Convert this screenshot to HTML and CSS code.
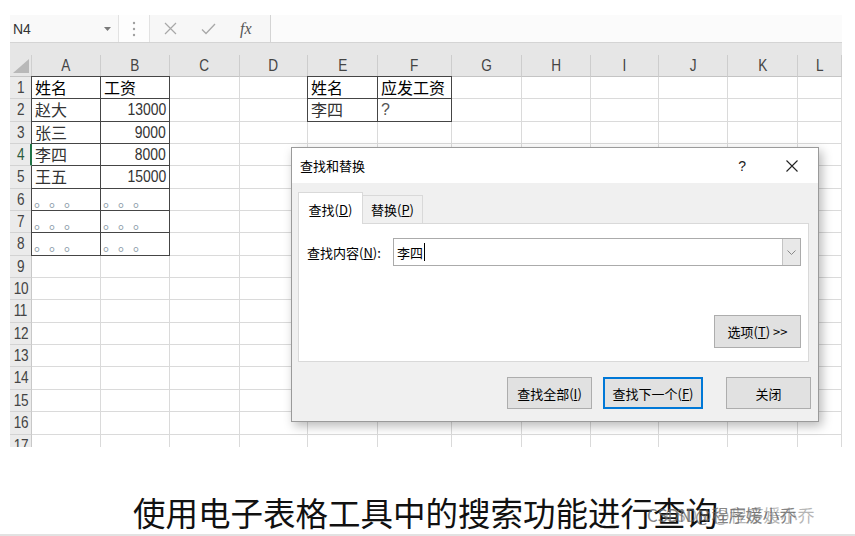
FILE: index.html
```html
<!DOCTYPE html>
<html lang="zh-CN">
<head>
<meta charset="utf-8">
<title>查找和替换</title>
<link rel="stylesheet" href="styles.css">
</head>
<body>
<div class="page">
  <div class="excel">
    <div class="fbar">
      <div class="namebox"><span>N4</span><svg width="7" height="4" viewBox="0 0 7 4"><path d="M0 0H7L3.5 4Z" fill="#7a7a7a"/></svg></div>
      <div class="grip"><svg width="4" height="16" viewBox="0 0 4 16"><circle cx="2" cy="2" r="1.2" fill="#a0a0a0"/><circle cx="2" cy="8" r="1.2" fill="#a0a0a0"/><circle cx="2" cy="14" r="1.2" fill="#a0a0a0"/></svg></div>
      <div class="fbtns">
        <svg class="fx-x" width="13" height="13" viewBox="0 0 13 13"><path d="M1 1L12 12M12 1L1 12" stroke="#a8a8a8" stroke-width="1.2" fill="none"/></svg>
        <svg class="fx-ok" width="15" height="12" viewBox="0 0 15 12"><path d="M1 6.5L5 10.5L14 1" stroke="#a8a8a8" stroke-width="1.3" fill="none"/></svg>
        <span class="fx">fx</span>
      </div>
      <div class="formula"></div>
    </div>
    <div class="band"></div>
    <div class="grid">
      <div class="corner"><svg width="16" height="14" viewBox="0 0 16 14"><path d="M16 0V14H0Z" fill="#b8b8b8"/></svg></div>
      <div class="ch"><span>A</span></div><div class="ch"><span>B</span></div><div class="ch"><span>C</span></div><div class="ch"><span>D</span></div><div class="ch"><span>E</span></div><div class="ch"><span>F</span></div><div class="ch"><span>G</span></div><div class="ch"><span>H</span></div><div class="ch"><span>I</span></div><div class="ch"><span>J</span></div><div class="ch"><span>K</span></div><div class="ch"><span>L</span></div>

      <div class="rh"><span>1</span></div><div class="c t tl tt hd">姓名</div><div class="c t tt hd">工资</div><div class="c"></div><div class="c"></div><div class="c t tl tt hd">姓名</div><div class="c t tt hd">应发工资</div><div class="c"></div><div class="c"></div><div class="c"></div><div class="c"></div><div class="c"></div><div class="c"></div>

      <div class="rh"><span>2</span></div><div class="c t tl">赵大</div><div class="c t num"><span>13000</span></div><div class="c"></div><div class="c"></div><div class="c t tl">李四</div><div class="c t q">?</div><div class="c"></div><div class="c"></div><div class="c"></div><div class="c"></div><div class="c"></div><div class="c"></div>

      <div class="rh"><span>3</span></div><div class="c t tl">张三</div><div class="c t num"><span>9000</span></div><div class="c"></div><div class="c"></div><div class="c"></div><div class="c"></div><div class="c"></div><div class="c"></div><div class="c"></div><div class="c"></div><div class="c"></div><div class="c"></div>

      <div class="rh sel"><span>4</span></div><div class="c t">李四</div><div class="c t num"><span>8000</span></div><div class="c"></div><div class="c"></div><div class="c"></div><div class="c"></div><div class="c"></div><div class="c"></div><div class="c"></div><div class="c"></div><div class="c"></div><div class="c"></div>

      <div class="rh"><span>5</span></div><div class="c t tl">王五</div><div class="c t num"><span>15000</span></div><div class="c"></div><div class="c"></div><div class="c"></div><div class="c"></div><div class="c"></div><div class="c"></div><div class="c"></div><div class="c"></div><div class="c"></div><div class="c"></div>

      <div class="rh"><span>6</span></div><div class="c t tl dots"><span>。</span><span>。</span><span>。</span></div><div class="c t dots"><span>。</span><span>。</span><span>。</span></div><div class="c"></div><div class="c"></div><div class="c"></div><div class="c"></div><div class="c"></div><div class="c"></div><div class="c"></div><div class="c"></div><div class="c"></div><div class="c"></div>

      <div class="rh"><span>7</span></div><div class="c t tl dots"><span>。</span><span>。</span><span>。</span></div><div class="c t dots"><span>。</span><span>。</span><span>。</span></div><div class="c"></div><div class="c"></div><div class="c"></div><div class="c"></div><div class="c"></div><div class="c"></div><div class="c"></div><div class="c"></div><div class="c"></div><div class="c"></div>

      <div class="rh"><span>8</span></div><div class="c t tl dots"><span>。</span><span>。</span><span>。</span></div><div class="c t dots"><span>。</span><span>。</span><span>。</span></div><div class="c"></div><div class="c"></div><div class="c"></div><div class="c"></div><div class="c"></div><div class="c"></div><div class="c"></div><div class="c"></div><div class="c"></div><div class="c"></div>

      <div class="rh"><span>9</span></div><div class="c"></div><div class="c"></div><div class="c"></div><div class="c"></div><div class="c"></div><div class="c"></div><div class="c"></div><div class="c"></div><div class="c"></div><div class="c"></div><div class="c"></div><div class="c"></div>
      <div class="rh"><span>10</span></div><div class="c"></div><div class="c"></div><div class="c"></div><div class="c"></div><div class="c"></div><div class="c"></div><div class="c"></div><div class="c"></div><div class="c"></div><div class="c"></div><div class="c"></div><div class="c"></div>
      <div class="rh"><span>11</span></div><div class="c"></div><div class="c"></div><div class="c"></div><div class="c"></div><div class="c"></div><div class="c"></div><div class="c"></div><div class="c"></div><div class="c"></div><div class="c"></div><div class="c"></div><div class="c"></div>
      <div class="rh"><span>12</span></div><div class="c"></div><div class="c"></div><div class="c"></div><div class="c"></div><div class="c"></div><div class="c"></div><div class="c"></div><div class="c"></div><div class="c"></div><div class="c"></div><div class="c"></div><div class="c"></div>
      <div class="rh"><span>13</span></div><div class="c"></div><div class="c"></div><div class="c"></div><div class="c"></div><div class="c"></div><div class="c"></div><div class="c"></div><div class="c"></div><div class="c"></div><div class="c"></div><div class="c"></div><div class="c"></div>
      <div class="rh"><span>14</span></div><div class="c"></div><div class="c"></div><div class="c"></div><div class="c"></div><div class="c"></div><div class="c"></div><div class="c"></div><div class="c"></div><div class="c"></div><div class="c"></div><div class="c"></div><div class="c"></div>
      <div class="rh"><span>15</span></div><div class="c"></div><div class="c"></div><div class="c"></div><div class="c"></div><div class="c"></div><div class="c"></div><div class="c"></div><div class="c"></div><div class="c"></div><div class="c"></div><div class="c"></div><div class="c"></div>
      <div class="rh"><span>16</span></div><div class="c"></div><div class="c"></div><div class="c"></div><div class="c"></div><div class="c"></div><div class="c"></div><div class="c"></div><div class="c"></div><div class="c"></div><div class="c"></div><div class="c"></div><div class="c"></div>
      <div class="rh"><span>17</span></div><div class="c"></div><div class="c"></div><div class="c"></div><div class="c"></div><div class="c"></div><div class="c"></div><div class="c"></div><div class="c"></div><div class="c"></div><div class="c"></div><div class="c"></div><div class="c"></div>
    </div>

    <div class="dialog">
      <div class="dtitle">
        <span>查找和替换</span>
        <div class="dctl">
          <span class="help">?</span>
          <svg width="12" height="12" viewBox="0 0 12 12"><path d="M0.5 0.5L11.5 11.5M11.5 0.5L0.5 11.5" stroke="#222" stroke-width="1.1" fill="none"/></svg>
        </div>
      </div>
      <div class="dbody">
        <div class="tabs">
          <div class="tab on">查找(<u>D</u>)</div>
          <div class="tab">替换(<u>P</u>)</div>
        </div>
        <div class="panel">
          <div class="frow">
            <div class="lbl">查找内容(<u>N</u>):</div>
            <div class="combo">
              <span class="val">李四</span><span class="cursor"></span>
              <span class="drop"><svg width="9" height="5" viewBox="0 0 9 5"><path d="M0.5 0.5L4.5 4.5L8.5 0.5" stroke="#888" stroke-width="1" fill="none"/></svg></span>
            </div>
          </div>
          <div class="optrow"><button class="btn opt">选项(<u>T</u>) &gt;&gt;</button></div>
        </div>
        <div class="brow">
          <button class="btn b1">查找全部(<u>I</u>)</button>
          <button class="btn b2">查找下一个(<u>F</u>)</button>
          <button class="btn b3">关闭</button>
        </div>
      </div>
    </div>
  </div>

  <div class="caption">使用电子表格工具中的搜索功能进行查询</div>
  <div class="rule"></div>
  <div class="wm">CSDN @程序媛小乔</div>
</div>
</body>
</html>
```

FILE: styles.css
```css
* { box-sizing: border-box; margin: 0; padding: 0; }
html, body { background: #fff; }
body {
  margin: 0;
  width: 855px;
  height: 536px;
  overflow: hidden;
  font-family: "Noto Sans CJK SC", "Liberation Sans", sans-serif;
  color: #000;
}
.page { position: relative; width: 855px; height: 536px; padding-top: 15px; }

.excel {
  position: relative;
  margin-left: 10px;
  width: 832px;
  height: 432px;
  overflow: hidden;
  background: #fff;
}

/* formula bar */
.fbar {
  display: flex;
  height: 28px;
  background: #f7f7f7;
  border-bottom: 1px solid #d4d4d4;
}
.namebox {
  width: 108px;
  display: flex;
  align-items: center;
  justify-content: space-between;
  padding: 0 7px 0 3px;
  font-family: "Liberation Sans", sans-serif;
  font-size: 14px;
  color: #333;
  background: #f9f9f9;
}
.grip {
  width: 32px;
  display: flex;
  align-items: center;
  justify-content: center;
  background: #fdfdfd;
  border-left: 1px solid #e2e2e2;
  border-right: 1px solid #e2e2e2;
}
.fbtns {
  width: 120px;
  display: flex;
  align-items: center;
}
.fx-x { margin-left: 14px; }
.fx-ok { margin-left: 24px; }
.fx {
  margin-left: 24px;
  font-family: "Liberation Serif", serif;
  font-style: italic;
  font-size: 16px;
  color: #555;
}
.formula {
  flex: 1;
  background: #fbfbfb;
  border-left: 1px solid #d4d4d4;
}
.band { height: 12px; background: #e6e6e6; }

/* grid */
.grid {
  display: grid;
  grid-template-columns: 22px 69px 69px 70px 68px 70px 74px 70px 69px 68px 69px 70px 44px;
  grid-template-rows: 22px;
  grid-auto-rows: 22.35px;
}
.corner {
  background: #e6e6e6;
  border-right: 1px solid #cfcfcf;
  border-bottom: 1px solid #c4c4c4;
  display: flex;
  align-items: flex-end;
  justify-content: flex-end;
  padding: 0 2px 3px 0;
}
.ch {
  background: #e6e6e6;
  border-right: 1px solid #cdcdcd;
  border-bottom: 1px solid #c4c4c4;
  text-align: center;
  font-family: "Liberation Sans", sans-serif;
  font-size: 17px;
  line-height: 21px;
  color: #444;
}
.ch span, .rh span { display: inline-block; transform: scaleX(0.8); }
.rh {
  background: #ebebeb;
  border-right: 1px solid #c8c8c8;
  border-bottom: 1px solid #d3d3d3;
  text-align: center;
  font-family: "Liberation Sans", sans-serif;
  font-size: 17px;
  line-height: 22px;
  color: #444;
  overflow: hidden;
  white-space: nowrap;
}
.rh span { letter-spacing: -0.5px; }
.rh.sel { border-right: 2px solid #217346; color: #2b5b3e; }
.c {
  border-right: 1px solid #dadada;
  border-bottom: 1px solid #dadada;
  font-size: 16px;
  line-height: 21px;
  padding: 0 3px;
  color: #333;
  white-space: nowrap;
}
.c.t { border-right-color: #454545; border-bottom-color: #454545; }
.c.tl { box-shadow: -1px 0 0 #454545; }
.c.tt { box-shadow: 0 -1px 0 #454545; }
.c.tl.tt { box-shadow: -1px 0 0 #454545, 0 -1px 0 #454545, -1px -1px 0 #454545; }
.c.hd { color: #000; }
.c.num {
  text-align: right;
  font-family: "Liberation Sans", sans-serif;
  font-size: 17px;
  color: #333;
}
.c.num span { display: inline-block; transform: scaleX(0.82); transform-origin: right center; }
.c.q { font-family: "Liberation Sans", sans-serif; color: #555; }
.c.dots { font-size: 15px; color: #8a99a8; line-height: 22px; padding-left: 2px; }
.c.dots span { display: inline-block; width: 15px; }

/* dialog */
.dialog {
  position: absolute;
  left: 281px;
  top: 132px;
  width: 528px;
  background: #f0f0f0;
  border: 1px solid #9a9a9a;
  box-shadow: 3px 4px 10px rgba(0, 0, 0, 0.28);
  font-size: 13px;
  color: #000;
}
.dtitle {
  height: 35px;
  background: #fff;
  display: flex;
  align-items: center;
  justify-content: space-between;
  padding: 0 20px 0 8px;
}
.dctl { display: flex; align-items: center; }
.help {
  font-family: "Liberation Sans", sans-serif;
  font-size: 14px;
  color: #222;
  margin-right: 40px;
}
.dbody { padding: 9px 9px 12px 6px; }
.tabs { display: flex; align-items: flex-end; height: 31px; position: relative; z-index: 1; }
.tab {
  height: 28px;
  width: 60px;
  border: 1px solid #d9d9d9;
  border-bottom: none;
  border-left: none;
  background: #f0f0f0;
  text-align: center;
  line-height: 27px;
}
.tab.on {
  height: 32px;
  width: 65px;
  margin-bottom: -1px;
  background: #fff;
  border-left: 1px solid #d9d9d9;
  line-height: 34px;
}
.panel {
  height: 139px;
  background: #fff;
  border: 1px solid #d9d9d9;
  padding: 14px 7px 0 8px;
}
.frow { display: flex; align-items: center; height: 28px; }
.lbl { flex: 0 0 86px; width: 86px; white-space: nowrap; }
.combo {
  flex: 1 1 auto;
  height: 28px;
  border: 1px solid #ababab;
  display: flex;
  align-items: center;
  padding-left: 3px;
  background: #fff;
}
.val { font-size: 13px; }
.cursor { width: 1px; height: 18px; background: #000; margin-left: 1px; }
.drop {
  margin-left: auto;
  width: 18px;
  height: 26px;
  background: #e8e8e8;
  border-left: 1px solid #c4c4c4;
  display: flex;
  align-items: center;
  justify-content: center;
}
.optrow { display: flex; justify-content: flex-end; margin-top: 49px; }
.btn {
  height: 32px;
  background: #e1e1e1;
  border: 1px solid #adadad;
  font-family: "Noto Sans CJK SC", "Liberation Sans", sans-serif;
  font-size: 13px;
  color: #000;
}
.btn.opt { width: 87px; height: 33px; }
.brow { display: flex; justify-content: flex-end; margin-top: 15px; margin-right: -2px; }
.b1 { width: 85px; }
.b2 { width: 100px; margin-left: 11px; border: 2px solid #0078d7; }
.b3 { width: 85px; margin-left: 23px; }

/* caption */
.caption {
  margin-top: 45px;
  height: 40px;
  line-height: 40px;
  text-align: center;
  font-size: 32.5px;
  color: #111;
  padding-right: 4px;
}
.rule { margin-top: 2px; height: 2px; background: #e2e2e2; }
.wm {
  position: absolute;
  left: 647px;
  top: 503px;
  font-size: 17px;
  line-height: 24px;
  color: rgba(100, 100, 100, 0.8);
  text-shadow: 18px 0 0 rgba(110, 110, 110, 0.5);
  white-space: nowrap;
}
```
